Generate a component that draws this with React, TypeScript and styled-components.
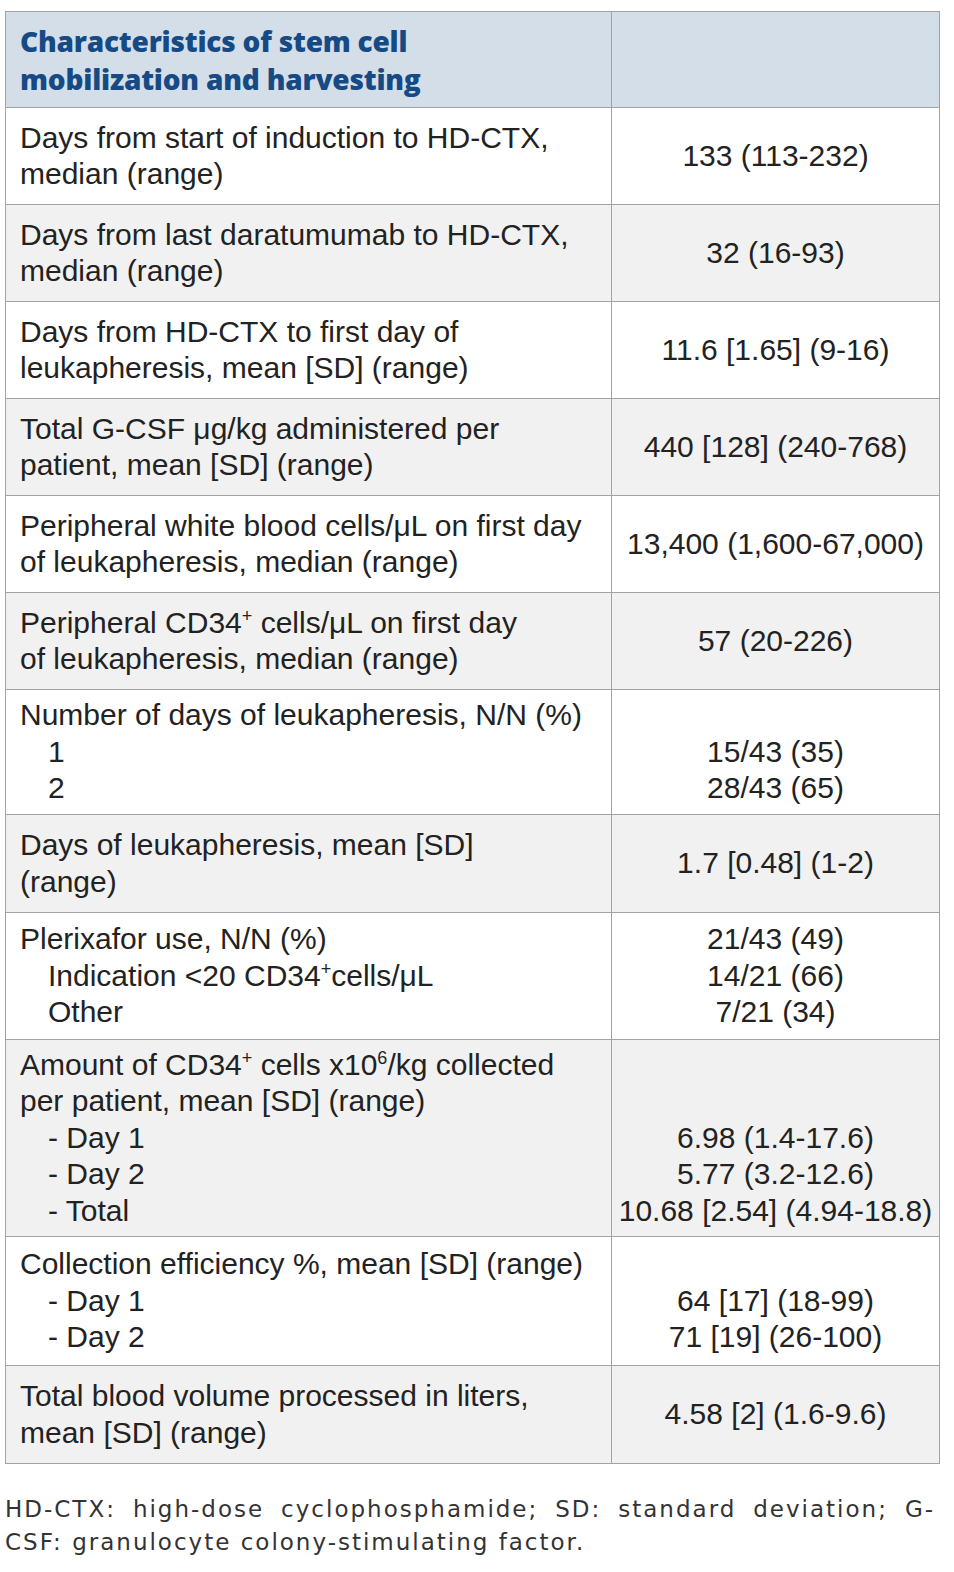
import React from "react";
import styled, { createGlobalStyle } from "styled-components";

const Global = createGlobalStyle`
  html, body { margin: 0; padding: 0; background: #ffffff; }
  body { font-family: "Liberation Sans", Arial, sans-serif; color: #222; }
`;

const Page = styled.div`
  padding: 11px 0 40px 5px;
  width: 934px;
`;

const Table = styled.table`
  width: 934px;
  border-collapse: collapse;
  table-layout: fixed;
  border: 1px solid #a3a3a3;
`;

const HeadRow = styled.tr`
  height: 96px;
  background: #d3dee8;
`;

const HeadCell = styled.th`
  border: 1px solid #a3a3a3;
  text-align: left;
  vertical-align: middle;
  padding: 0 14px;
  font-family: "Open Sans", Lato, sans-serif;
  font-weight: 800;
  font-size: 28px;
  line-height: 38px;
  letter-spacing: -0.2px;
  color: #164a85;
`;

const Row = styled.tr<{ $shade: boolean; $h: number }>`
  height: ${(p) => p.$h}px;
  background: ${(p) => (p.$shade ? "#f1f1f1" : "#ffffff")};
`;

const LabelCell = styled.td`
  border: 1px solid #a3a3a3;
  padding: 0 4px 0 14px;
  vertical-align: middle;
  white-space: nowrap;
  font-size: 30px;
  line-height: 36.5px;
  color: #222;
`;

const ValueCell = styled.td`
  border: 1px solid #a3a3a3;
  padding: 0 2px;
  vertical-align: middle;
  text-align: center;
  white-space: nowrap;
  font-size: 30px;
  line-height: 36.5px;
  color: #222;
`;

const Line = styled.div<{ $indent?: boolean }>`
  padding-left: ${(p) => (p.$indent ? "28px" : "0")};
  min-height: 36.5px;
`;

const Sup = styled.sup`
  font-size: 18px;
  line-height: 0;
  vertical-align: 11px;
`;

const Note = styled.div`
  margin-top: 29px;
  width: 930px;
  font-family: "DejaVu Sans", "Open Sans", sans-serif;
  font-size: 23px;
  line-height: 33px;
  letter-spacing: 2px;
  color: #333;
`;

const NoteLine = styled.div<{ $full?: boolean }>`
  text-align: ${(p) => (p.$full ? "justify" : "left")};
  text-align-last: ${(p) => (p.$full ? "justify" : "left")};
  white-space: nowrap;
`;

type LineT = { text: React.ReactNode; indent?: boolean };
type RowT = { h: number; label: LineT[]; value: React.ReactNode[] };

const CD34 = (
  <>
    CD34<Sup>+</Sup>
  </>
);

const rows: RowT[] = [
  {
    h: 97,
    label: [{ text: "Days from start of induction to HD-CTX," }, { text: "median (range)" }],
    value: ["133 (113-232)"],
  },
  {
    h: 97,
    label: [{ text: "Days from last daratumumab to HD-CTX," }, { text: "median (range)" }],
    value: ["32 (16-93)"],
  },
  {
    h: 97,
    label: [{ text: "Days from HD-CTX to first day of" }, { text: "leukapheresis, mean [SD] (range)" }],
    value: ["11.6 [1.65] (9-16)"],
  },
  {
    h: 97,
    label: [{ text: "Total G-CSF μg/kg administered per" }, { text: "patient, mean [SD] (range)" }],
    value: ["440 [128] (240-768)"],
  },
  {
    h: 97,
    label: [{ text: "Peripheral white blood cells/μL on first day" }, { text: "of leukapheresis, median (range)" }],
    value: ["13,400 (1,600-67,000)"],
  },
  {
    h: 97,
    label: [
      { text: <>Peripheral {CD34} cells/μL on first day</> },
      { text: "of leukapheresis, median (range)" },
    ],
    value: ["57 (20-226)"],
  },
  {
    h: 125,
    label: [
      { text: "Number of days of leukapheresis, N/N (%)" },
      { text: "1", indent: true },
      { text: "2", indent: true },
    ],
    value: ["", "15/43 (35)", "28/43 (65)"],
  },
  {
    h: 98,
    label: [{ text: "Days of leukapheresis, mean [SD]" }, { text: "(range)" }],
    value: ["1.7 [0.48] (1-2)"],
  },
  {
    h: 127,
    label: [
      { text: "Plerixafor use, N/N (%)" },
      { text: <>Indication &lt;20 {CD34}cells/μL</>, indent: true },
      { text: "Other", indent: true },
    ],
    value: ["21/43 (49)", "14/21 (66)", "7/21 (34)"],
  },
  {
    h: 197,
    label: [
      { text: <>Amount of {CD34} cells x10<Sup>6</Sup>/kg collected</> },
      { text: "per patient, mean [SD] (range)" },
      { text: "- Day 1", indent: true },
      { text: "- Day 2", indent: true },
      { text: "- Total", indent: true },
    ],
    value: ["", "", "6.98 (1.4-17.6)", "5.77 (3.2-12.6)", "10.68 [2.54] (4.94-18.8)"],
  },
  {
    h: 129,
    label: [
      { text: "Collection efficiency %, mean [SD] (range)" },
      { text: "- Day 1", indent: true },
      { text: "- Day 2", indent: true },
    ],
    value: ["", "64 [17] (18-99)", "71 [19] (26-100)"],
  },
  {
    h: 98,
    label: [{ text: "Total blood volume processed in liters," }, { text: "mean [SD] (range)" }],
    value: ["4.58 [2] (1.6-9.6)"],
  },
];

export default function App() {
  return (
    <>
      <Global />
      <Page>
        <Table>
          <colgroup>
            <col style={{ width: "606px" }} />
            <col style={{ width: "328px" }} />
          </colgroup>
          <thead>
            <HeadRow>
              <HeadCell>
                Characteristics of stem cell
                <br />
                mobilization and harvesting
              </HeadCell>
              <HeadCell />
            </HeadRow>
          </thead>
          <tbody>
            {rows.map((r, i) => (
              <Row key={i} $h={r.h} $shade={i % 2 === 1}>
                <LabelCell>
                  {r.label.map((l, j) => (
                    <Line key={j} $indent={l.indent}>
                      {l.text}
                    </Line>
                  ))}
                </LabelCell>
                <ValueCell>
                  {r.value.map((v, j) => (
                    <Line key={j}>{v}</Line>
                  ))}
                </ValueCell>
              </Row>
            ))}
          </tbody>
        </Table>
        <Note>
          <NoteLine $full>HD-CTX: high-dose cyclophosphamide; SD: standard deviation; G-</NoteLine>
          <NoteLine>CSF: granulocyte colony-stimulating factor.</NoteLine>
        </Note>
      </Page>
    </>
  );
}
